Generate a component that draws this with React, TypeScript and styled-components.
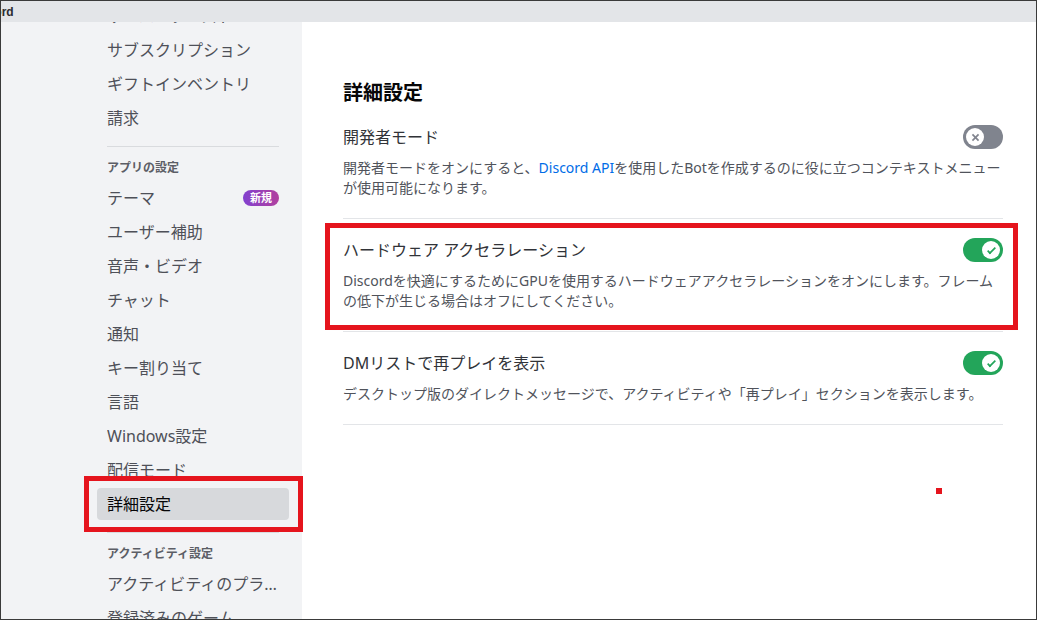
import React from 'react';
import styled, { createGlobalStyle } from 'styled-components';

const GlobalStyle = createGlobalStyle`
  html, body {
    margin: 0;
    padding: 0;
    background: #ffffff;
  }
  body {
    font-family: "Noto Sans", "Noto Sans CJK JP", sans-serif;
  }
`;

type NavEntry =
  | { kind: 'item'; label: string; selected?: boolean; badge?: string }
  | { kind: 'header'; label: string }
  | { kind: 'separator' };

const navEntries: NavEntry[] = [
  { kind: 'item', label: 'サーバーブースト' },
  { kind: 'item', label: 'サブスクリプション' },
  { kind: 'item', label: 'ギフトインベントリ' },
  { kind: 'item', label: '請求' },
  { kind: 'separator' },
  { kind: 'header', label: 'アプリの設定' },
  { kind: 'item', label: 'テーマ', badge: '新規' },
  { kind: 'item', label: 'ユーザー補助' },
  { kind: 'item', label: '音声・ビデオ' },
  { kind: 'item', label: 'チャット' },
  { kind: 'item', label: '通知' },
  { kind: 'item', label: 'キー割り当て' },
  { kind: 'item', label: '言語' },
  { kind: 'item', label: 'Windows設定' },
  { kind: 'item', label: '配信モード' },
  { kind: 'item', label: '詳細設定', selected: true },
  { kind: 'separator' },
  { kind: 'header', label: 'アクティビティ設定' },
  { kind: 'item', label: 'アクティビティのプライバシー' },
  { kind: 'item', label: '登録済みのゲーム' },
];

function Toggle({ on }: { on: boolean }) {
  return (
    <Track $on={on}>
      <Knob>
        <svg width="15" height="15" viewBox="0 0 20 20">
          {on ? (
            <>
              <path fill="#23a55a" d="M7.89561 14.8538L6.30462 13.2629L14.3099 5.25755L15.9009 6.84854L7.89561 14.8538Z" />
              <path fill="#23a55a" d="M4.08643 11.0903L5.67742 9.49929L9.4485 13.2704L7.85751 14.8614L4.08643 11.0903Z" />
            </>
          ) : (
            <>
              <path fill="#80848e" d="M5.13231 6.72963L6.7233 5.13864L14.855 13.2704L13.264 14.8614L5.13231 6.72963Z" />
              <path fill="#80848e" d="M13.2704 5.13864L14.8614 6.72963L6.72963 14.8614L5.13864 13.2704L13.2704 5.13864Z" />
            </>
          )}
        </svg>
      </Knob>
    </Track>
  );
}

export default function App() {
  return (
    <>
      <GlobalStyle />
      <Frame>
        <TitleBar>
          <TitleText>Discord</TitleText>
        </TitleBar>
        <Body>
          <Sidebar>
            <Nav>
              {navEntries.map((entry, index) => {
                if (entry.kind === 'separator') return <Separator key={index} />;
                if (entry.kind === 'header') return <NavHeader key={index}>{entry.label}</NavHeader>;
                return (
                  <NavItem key={index} $selected={!!entry.selected}>
                    <NavLabel>{entry.label}</NavLabel>
                    {entry.badge && <Badge>{entry.badge}</Badge>}
                    {entry.selected && <Highlight $inset="-12px -14px -12px -13px" />}
                  </NavItem>
                );
              })}
            </Nav>
          </Sidebar>
          <Main>
            <Content>
              <Heading>詳細設定</Heading>
              <Row>
                <RowHead>
                  <RowTitle>開発者モード</RowTitle>
                  <Toggle on={false} />
                </RowHead>
                <RowDesc>
                  開発者モードをオンにすると、<Link>Discord API</Link>を使用したBotを作成するのに役に立つコンテキストメニューが使用可能になります。
                </RowDesc>
              </Row>
              <Divider />
              <Row>
                <RowHead>
                  <RowTitle>ハードウェア アクセラレーション</RowTitle>
                  <Toggle on />
                </RowHead>
                <RowDesc>
                  Discordを快適にするためにGPUを使用するハードウェアアクセラレーションをオンにします。フレームの低下が生じる場合はオフにしてください。
                </RowDesc>
                <Highlight $inset="-15px -15px -19px -18px" />
              </Row>
              <Divider />
              <Row>
                <RowHead>
                  <RowTitle>DMリストで再プレイを表示</RowTitle>
                  <Toggle on />
                </RowHead>
                <RowDesc>
                  デスクトップ版のダイレクトメッセージで、アクティビティや「再プレイ」セクションを表示します。
                </RowDesc>
              </Row>
              <Divider />
            </Content>
            <RedDot />
          </Main>
        </Body>
      </Frame>
    </>
  );
}

const Frame = styled.div`
  width: 1037px;
  height: 620px;
  box-sizing: border-box;
  border: 1px solid #3a3a3a;
  display: flex;
  flex-direction: column;
  overflow: hidden;
  background: #ffffff;
`;

const TitleBar = styled.div`
  height: 21px;
  flex-shrink: 0;
  background: #e3e5e8;
  display: flex;
  align-items: center;
  overflow: hidden;
  position: relative;
  z-index: 2;
`;

const TitleText = styled.span`
  margin-left: -32px;
  font-family: "Liberation Sans", sans-serif;
  font-size: 12px;
  font-weight: 700;
  color: #2b2d31;
  white-space: nowrap;
`;

const Body = styled.div`
  flex: 1;
  min-height: 0;
  display: flex;
  overflow: hidden;
`;

const Sidebar = styled.aside`
  width: 301px;
  flex-shrink: 0;
  box-sizing: border-box;
  padding: 0 13px 0 96px;
  background: #f2f3f5;
`;

const Nav = styled.nav`
  margin-top: -22px;
  display: flex;
  flex-direction: column;
`;

const NavItem = styled.div<{ $selected: boolean }>`
  position: relative;
  height: 32px;
  flex-shrink: 0;
  margin-bottom: 2px;
  padding: 0 10px;
  border-radius: 4px;
  display: flex;
  align-items: center;
  justify-content: space-between;
  gap: 8px;
  font-size: 16px;
  line-height: 20px;
  color: ${p => (p.$selected ? '#060607' : '#4e5058')};
  background: ${p => (p.$selected ? '#d7d9dc' : 'transparent')};
`;

const NavLabel = styled.span`
  min-width: 0;
  white-space: nowrap;
  overflow: hidden;
  text-overflow: ellipsis;
`;

const NavHeader = styled.div`
  padding: 3px 10px 6px;
  font-size: 12px;
  line-height: 16px;
  font-weight: 700;
  color: #5c5e66;
`;

const Separator = styled.div`
  height: 1px;
  flex-shrink: 0;
  margin: 10px 10px;
  background: #d9dbde;
`;

const Badge = styled.span`
  flex-shrink: 0;
  height: 16px;
  padding: 0 7px;
  border-radius: 8px;
  font-size: 11px;
  line-height: 16px;
  font-weight: 700;
  color: #ffffff;
  background: linear-gradient(90deg, #8240cf, #b1409e);
`;

const Main = styled.main`
  position: relative;
  flex: 1;
  padding: 59px 0 0 41px;
  background: #ffffff;
`;

const Content = styled.div`
  width: 660px;
  display: flex;
  flex-direction: column;
`;

const Heading = styled.h2`
  margin: 0 0 20px;
  font-size: 20px;
  line-height: 24px;
  font-weight: 700;
  color: #060607;
`;

const Row = styled.section`
  position: relative;
  display: flex;
  flex-direction: column;
`;

const RowHead = styled.div`
  display: flex;
  align-items: center;
  justify-content: space-between;
`;

const RowTitle = styled.div`
  font-size: 16px;
  line-height: 24px;
  font-weight: 400;
  color: #313338;
`;

const RowDesc = styled.div`
  margin-top: 9px;
  font-size: 14px;
  line-height: 20px;
  color: #50535b;
`;

const Link = styled.span`
  color: #006ce7;
`;

const Divider = styled.div`
  height: 1px;
  margin: 20px 0 19px;
  background: #e3e5e8;
`;

const Track = styled.div<{ $on: boolean }>`
  width: 40px;
  height: 24px;
  flex-shrink: 0;
  box-sizing: border-box;
  padding: 0 3px;
  border-radius: 12px;
  display: flex;
  align-items: center;
  justify-content: ${p => (p.$on ? 'flex-end' : 'flex-start')};
  background: ${p => (p.$on ? '#23a55a' : '#80848e')};
`;

const Knob = styled.span`
  width: 18px;
  height: 18px;
  border-radius: 50%;
  background: #ffffff;
  display: flex;
  align-items: center;
  justify-content: center;
`;

const Highlight = styled.div<{ $inset: string }>`
  position: absolute;
  inset: ${p => p.$inset};
  border: 5px solid #e5141d;
  pointer-events: none;
  z-index: 1;
`;

const RedDot = styled.div`
  position: absolute;
  left: 634px;
  top: 466px;
  width: 6px;
  height: 6px;
  background: #e5141d;
`;
